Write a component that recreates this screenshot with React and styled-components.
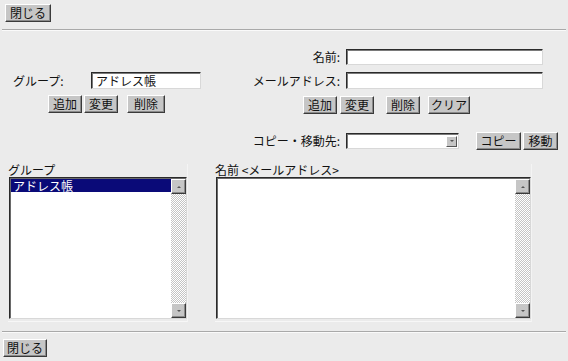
import React from "react";
import styled, { createGlobalStyle } from "styled-components";

const GlobalStyle = createGlobalStyle`
  html, body {
    margin: 0;
    padding: 0;
    background: #ebebeb;
  }
  body {
    font-family: "Noto Sans CJK JP", "Noto Sans", sans-serif;
    font-size: 12px;
    color: #111;
  }
`;

const Page = styled.div`
  width: 568px;
  height: 361px;
  display: flex;
  flex-direction: column;
  overflow: hidden;
`;

const Bar = styled.div`
  display: flex;
  padding: ${(p) => p.$pad};
`;

const Rule = styled.div`
  margin: ${(p) => p.$margin};
  border-top: 1px solid #a9a9a9;
  border-bottom: 1px solid #fafafa;
`;

const Button = styled.button`
  box-sizing: border-box;
  width: ${(p) => p.$w}px;
  height: 18px;
  margin-left: ${(p) => p.$ml || 0}px;
  padding: 0;
  font-family: inherit;
  font-size: 12px;
  line-height: 14px;
  color: #111;
  background: #c6c6c6;
  border: 1px solid;
  border-color: #fff #3a3a3a #3a3a3a #fff;
  box-shadow: inset -1px -1px #8a8a8a;
  text-align: center;
`;

const FormArea = styled.div`
  display: flex;
  padding-top: 18px;
`;

const LeftBlock = styled.div`
  width: 250px;
  padding-top: 23px;
`;

const RightBlock = styled.div`
  flex: 1;
  display: flex;
  flex-direction: column;
  gap: 7px;
`;

const Row = styled.div`
  display: flex;
  align-items: center;
  padding-left: ${(p) => p.$pl || 0}px;
  margin-top: ${(p) => p.$mt || 0}px;
`;

const Label = styled.span`
  width: ${(p) => p.$w}px;
  text-align: ${(p) => p.$align || "right"};
  margin-right: 6px;
  line-height: 14px;
  white-space: nowrap;
`;

const TextInput = styled.div`
  box-sizing: border-box;
  width: ${(p) => p.$w}px;
  height: ${(p) => p.$h || 16}px;
  background: #fff;
  border: 1px solid;
  border-color: #2a2a2a #d8d8d8 #d8d8d8 #2a2a2a;
  box-shadow: inset 1px 1px #7a7a7a;
  padding-left: 4px;
  line-height: 14px;
  white-space: nowrap;
  display: flex;
  align-items: center;
`;

const SelectArrow = styled.span`
  margin-left: auto;
  margin-right: 1px;
  width: 11px;
  height: 11px;
  box-sizing: border-box;
  background: #c6c6c6;
  border: 1px solid;
  border-color: #fff #555 #555 #fff;
  display: flex;
  align-items: center;
  justify-content: center;
`;

const Tri = styled.span`
  width: 0;
  height: 0;
  border-left: 2px solid transparent;
  border-right: 2px solid transparent;
  ${(p) => (p.$up ? "border-bottom" : "border-top")}: 2px solid #555;
`;

const ListsArea = styled.div`
  display: flex;
  padding-left: 8px;
  margin-top: 14px;
  gap: 27px;
`;

const ListPanel = styled.div`
  display: flex;
  flex-direction: column;
  padding-bottom: 2px;
  border-bottom: 1px solid #f7f7f7;
  border-right: 1px solid #f4f4f4;
`;

const ListTitle = styled.div`
  line-height: 12px;
  height: 13px;
  white-space: nowrap;
`;

const ListBox = styled.div`
  box-sizing: border-box;
  width: ${(p) => p.$w}px;
  height: 142px;
  margin-left: 1px;
  display: flex;
  background: #fff;
  border: 1px solid;
  border-color: #2a2a2a #d8d8d8 #d8d8d8 #2a2a2a;
  box-shadow: inset 1px 1px #6a6a6a;
  padding: 1px 0 0 1px;
`;

const Items = styled.div`
  flex: 1;
`;

const Item = styled.div`
  height: 13px;
  line-height: 13px;
  padding-left: 2px;
  background: ${(p) => (p.$selected ? "#0a0a78" : "transparent")};
  color: ${(p) => (p.$selected ? "#fff" : "#111")};
  white-space: nowrap;
`;

const Scrollbar = styled.div`
  width: 15px;
  display: flex;
  flex-direction: column;
  justify-content: space-between;
  background-color: #fff;
  background-image: repeating-conic-gradient(#c4c4c4 0 25%, #fff 0 50%);
  background-size: 2px 2px;
`;

const ScrollButton = styled.div`
  box-sizing: border-box;
  width: 15px;
  height: 15px;
  background: #c6c6c6;
  border: 1px solid;
  border-color: #fff #3a3a3a #3a3a3a #fff;
  box-shadow: inset -1px -1px #8a8a8a;
  display: flex;
  align-items: center;
  justify-content: center;
`;

const List = ({ title, width, items }) => (
  <ListPanel>
    <ListTitle>{title}</ListTitle>
    <ListBox $w={width}>
      <Items>
        {items.map((it) => (
          <Item key={it} $selected>
            {it}
          </Item>
        ))}
      </Items>
      <Scrollbar>
        <ScrollButton>
          <Tri $up />
        </ScrollButton>
        <ScrollButton>
          <Tri />
        </ScrollButton>
      </Scrollbar>
    </ListBox>
  </ListPanel>
);

export default function App() {
  return (
    <Page>
      <GlobalStyle />
      <Bar $pad="4px 5px 0">
        <Button $w={46}>閉じる</Button>
      </Bar>
      <Rule $margin="7px 2px 0" />

      <FormArea>
        <LeftBlock>
          <Row $pl={13}>
            <Label $w={72} $align="left">
              グループ:
            </Label>
            <TextInput $w={110} $h={17}>
              アドレス帳
            </TextInput>
          </Row>
          <Row $pl={48} $mt={6}>
            <Button $w={34}>追加</Button>
            <Button $w={34} $ml={2}>変更</Button>
            <Button $w={38} $ml={9}>削除</Button>
          </Row>
        </LeftBlock>

        <RightBlock>
          <Row>
            <Label $w={90}>名前:</Label>
            <TextInput $w={197} />
          </Row>
          <Row>
            <Label $w={90}>メールアドレス:</Label>
            <TextInput $w={197} $h={17} />
          </Row>
          <Row $pl={53}>
            <Button $w={34}>追加</Button>
            <Button $w={34} $ml={3}>変更</Button>
            <Button $w={34} $ml={12}>削除</Button>
            <Button $w={42} $ml={8}>クリア</Button>
          </Row>
          <Row $mt={11}>
            <Label $w={90}>コピー・移動先:</Label>
            <TextInput $w={113}>
              <SelectArrow>
                <Tri />
              </SelectArrow>
            </TextInput>
            <Button $w={45} $ml={17}>コピー</Button>
            <Button $w={35} $ml={2}>移動</Button>
          </Row>
        </RightBlock>
      </FormArea>

      <ListsArea>
        <List title="グループ" width={178} items={["アドレス帳"]} />
        <List title="名前 <メールアドレス>" width={315} items={[]} />
      </ListsArea>

      <Rule $margin="9px 2px 0" />
      <Bar $pad="6px 3px 0">
        <Button $w={44}>閉じる</Button>
      </Bar>
    </Page>
  );
}
